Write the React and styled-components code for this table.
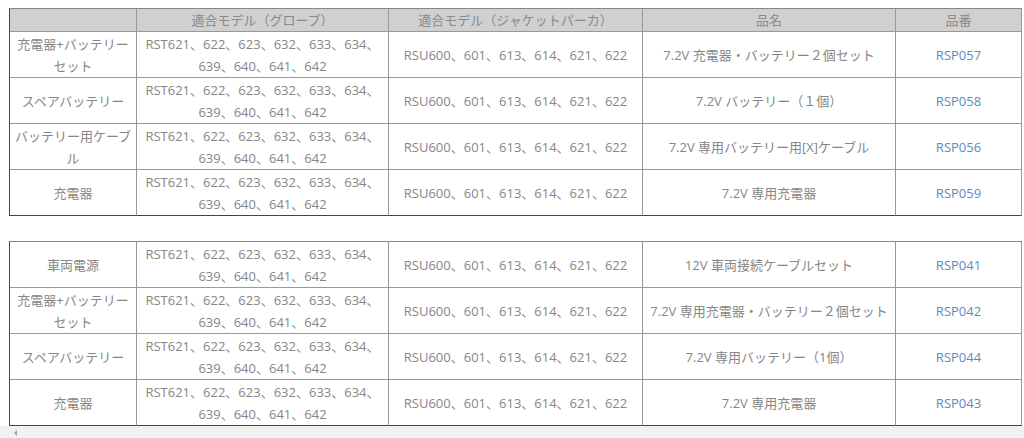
import React from "react";
import styled, { createGlobalStyle } from "styled-components";

const GlobalStyle = createGlobalStyle`
  body {
    margin: 0;
    background: #fff;
    font-family: "Open Sans", "Noto Sans CJK JP", sans-serif;
  }
`;

const gloveModels = (
  <>
    RST621、622、623、632、633、634、
    <br />
    639、640、641、642
  </>
);
const jacketModels = "RSU600、601、613、614、621、622";

const set1 = [
  { kind: "充電器+バッテリーセット", name: "7.2V 充電器・バッテリー２個セット", code: "RSP057" },
  { kind: "スペアバッテリー", name: "7.2V バッテリー（１個）", code: "RSP058" },
  { kind: "バッテリー用ケーブル", name: "7.2V 専用バッテリー用[X]ケーブル", code: "RSP056" },
  { kind: "充電器", name: "7.2V 専用充電器", code: "RSP059" },
];

const set2 = [
  { kind: "車両電源", name: "12V 車両接続ケーブルセット", code: "RSP041" },
  { kind: "充電器+バッテリーセット", name: "7.2V 専用充電器・バッテリー２個セット", code: "RSP042" },
  { kind: "スペアバッテリー", name: "7.2V 専用バッテリー（1個）", code: "RSP044" },
  { kind: "充電器", name: "7.2V 専用充電器", code: "RSP043" },
];

function PartsTable({ rows, header }) {
  return (
    <Table>
      <colgroup>
        <col style={{ width: 127 }} />
        <col style={{ width: 252 }} />
        <col style={{ width: 254 }} />
        <col style={{ width: 253 }} />
        <col style={{ width: 126 }} />
      </colgroup>
      {header && (
        <thead>
          <tr>
            <Th></Th>
            <Th>適合モデル（グローブ）</Th>
            <Th>適合モデル（ジャケットパーカ）</Th>
            <Th>品名</Th>
            <Th>品番</Th>
          </tr>
        </thead>
      )}
      <tbody>
        {rows.map((r, i) => (
          <tr key={r.code}>
            <Td last={i === rows.length - 1}>{r.kind}</Td>
            <Td last={i === rows.length - 1}>{gloveModels}</Td>
            <Td last={i === rows.length - 1}>{jacketModels}</Td>
            <Td last={i === rows.length - 1}>{r.name}</Td>
            <Td last={i === rows.length - 1}>
              <Code href="#">{r.code}</Code>
            </Td>
          </tr>
        ))}
      </tbody>
    </Table>
  );
}

export default function App() {
  return (
    <>
      <GlobalStyle />
      <Page>
        <PartsTable rows={set1} header />
        <PartsTable rows={set2} />
      </Page>
      <ScrollTrack>
        <Arrow />
      </ScrollTrack>
    </>
  );
}

const Page = styled.div`
  padding: 8px 0 0 9px;
  display: flex;
  flex-direction: column;
  gap: 25px;
`;

const Table = styled.table`
  table-layout: fixed;
  width: 1013px;
  border-collapse: separate;
  border-spacing: 0;
  border-left: 1px solid #444;
  border-top: 1px solid #888;
  font-size: 13px;
  color: #868686;
`;

const Th = styled.th`
  height: 22px;
  padding: 0 4px;
  background: #d0d0d0;
  font-weight: normal;
  color: #8a8a8a;
  text-align: center;
  line-height: 22px;
  border-right: 1px solid #999;
  border-bottom: 1px solid #999;
`;

const Td = styled.td`
  height: 45px;
  padding: 1px 4px 0;
  box-sizing: border-box;
  text-align: center;
  vertical-align: middle;
  line-height: 22px;
  border-right: 1px solid #999;
  border-bottom: 1px solid ${(p) => (p.last ? "#444" : "#999")};
`;

const Code = styled.a`
  color: #5a8cbd;
  text-decoration: none;
`;

const ScrollTrack = styled.div`
  height: 14px;
  background: #f1f1f1;
  display: flex;
  align-items: center;
  padding-left: 14px;
`;

const Arrow = styled.span`
  width: 0;
  height: 0;
  border-top: 3px solid transparent;
  border-bottom: 3px solid transparent;
  border-right: 3px solid #a3a3a3;
`;
